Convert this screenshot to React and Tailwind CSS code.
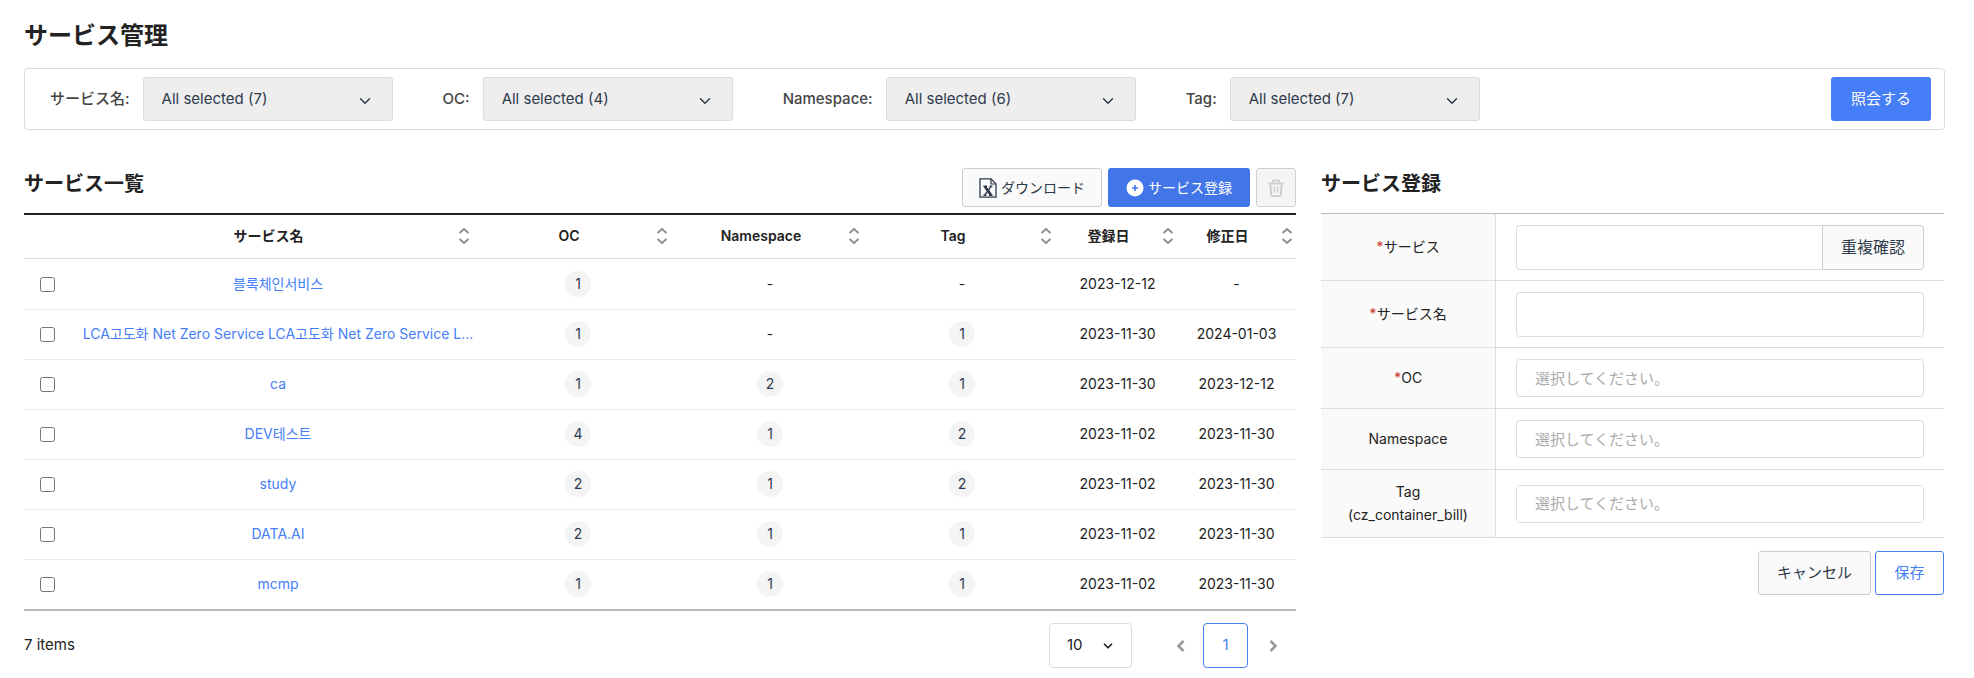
import React, { useState } from 'react';
import { ChevronDown } from 'lucide-react';
import { clsx } from 'clsx';

const filters = [
    { id: 'service', label: 'サービス名:', value: 'All selected (7)' },
    { id: 'oc', label: 'OC:', value: 'All selected (4)' },
    { id: 'namespace', label: 'Namespace:', value: 'All selected (6)' },
    { id: 'tag', label: 'Tag:', value: 'All selected (7)' },
];

const columns = [
    { label: 'サービス名', className: 'pl-2 pr-[9px]' },
    { label: 'OC', className: 'pl-[3px] pr-[3px]' },
    { label: 'Namespace', className: 'pl-[3px] pr-[3px]' },
    { label: 'Tag', className: 'pl-[3px] pr-[3px]' },
    { label: '登録日', className: '' },
    { label: '修正日', className: '' },
];

const services = [
    { name: '블록체인서비스', oc: 1, namespace: 0, tag: 0, created: '2023-12-12', updated: '-' },
    { name: 'LCA고도화 Net Zero Service LCA고도화 Net Zero Service L...', oc: 1, namespace: 0, tag: 1, created: '2023-11-30', updated: '2024-01-03' },
    { name: 'ca', oc: 1, namespace: 2, tag: 1, created: '2023-11-30', updated: '2023-12-12' },
    { name: 'DEV테스트', oc: 4, namespace: 1, tag: 2, created: '2023-11-02', updated: '2023-11-30' },
    { name: 'study', oc: 2, namespace: 1, tag: 2, created: '2023-11-02', updated: '2023-11-30' },
    { name: 'DATA.AI', oc: 2, namespace: 1, tag: 1, created: '2023-11-02', updated: '2023-11-30' },
    { name: 'mcmp', oc: 1, namespace: 1, tag: 1, created: '2023-11-02', updated: '2023-11-30' },
];

function ExcelIcon() {
    return (
        <svg width="18" height="20" viewBox="0 0 18 20" fill="none" stroke="#2f3b4c">
            <path d="M1 .8h11L17 6v13.2H1z" strokeWidth="1.3" />
            <path d="M12 1v5h5" strokeWidth="1.2" />
            <path d="M5.9 8.5l6.1 8.5" strokeWidth="2.8" />
            <path d="M12.2 8.300l-6.4 8.700M4.400 8.200h3.600M10.600 8.200h2.800M4.400 17.200h3M10 17.200h3.600" strokeWidth="1.4" />
        </svg>
    );
}

function PlusCircleIcon() {
    return (
        <svg width="18" height="18" viewBox="0 0 18 18">
            <circle cx="9" cy="9" r="8.5" fill="#fff" />
            <path d="M9 6v6M6 9h6" stroke="#4276e8" strokeWidth="1.6" />
        </svg>
    );
}

function TrashIcon() {
    return (
        <svg width="16" height="18" viewBox="0 0 16 18" fill="none" stroke="#d0d0d0" strokeWidth="2">
            <path d="M.5 4.5h15M5 4V1.5h6V4M2.5 5l.5 10.5c0 .9.6 1.5 1.4 1.5h7.2c.8 0 1.4-.6 1.4-1.5L13.5 5" />
            <path d="M6.4 7.5v6.5M9.6 7.5v6.5" strokeWidth="1.5" />
        </svg>
    );
}

function SortIcon() {
    return (
        <svg width="18" height="18" viewBox="0 0 18 18" fill="none" stroke="#8f8f8f" strokeWidth="2" className="shrink-0">
            <path d="M4.5 6L9 2l4.5 4M4.5 12L9 16l4.5-4" />
        </svg>
    );
}

function CountBadge({ count }) {
    if (!count) return '-';
    return (
        <span className="inline-flex size-[26px] items-center justify-center rounded-full bg-[#f4f4f4] text-sm text-[#2f3b4c]">
            {count}
        </span>
    );
}

function FilterSelect({ id, label, value }) {
    return (
        <div className="flex items-center gap-[13px]">
            <label htmlFor={id} className="text-[15px] font-medium text-[#444]">{label}</label>
            <div className="relative">
                <select id={id} className="h-11 w-[250px] appearance-none rounded-[3px] border border-[#dcdcdc] bg-[#eee] px-[18px] text-[15px] text-[#2f3b4c]">
                    <option>{value}</option>
                </select>
                <ChevronDown size={18} className="pointer-events-none absolute right-[19px] top-[15px] text-[#2f3b4c]" />
            </div>
        </div>
    );
}

function FormRow({ id, label, required, className, children }) {
    return (
        <div className={clsx('flex border-b border-[#dcdcdc]', className)}>
            <label htmlFor={id} className="flex w-[175px] shrink-0 items-center justify-center border-r border-[#dcdcdc] bg-[#fafafa] pb-0.5 text-center text-sm leading-[23px] text-[#222]">
                <span>
                    {required && <span className="font-medium text-[#d0493f]">*</span>}
                    {label}
                </span>
            </label>
            <div className="flex flex-1 items-center px-5">{children}</div>
        </div>
    );
}

const inputClass = 'w-full rounded border border-[#dcdcdc] px-[18px] text-[15px] text-[#222] placeholder:text-[#aaa]';

function ServiceTable() {
    const [checked, setChecked] = useState([]);

    const toggle = (name) => {
        setChecked(checked.includes(name) ? checked.filter((n) => n !== name) : [...checked, name]);
    };

    return (
        <table className="w-full table-fixed border-y-2 border-t-[#222] border-b-[#bbb] text-sm text-[#222]">
            <colgroup>
                <col className="w-[50px]" />
                <col />
                <col className="w-[192px]" />
                <col className="w-[192px]" />
                <col className="w-[192px]" />
                <col className="w-[119px]" />
                <col className="w-[119px]" />
            </colgroup>
            <thead>
                <tr className="h-11 border-b border-[#dcdcdc]">
                    <td />
                    {columns.map((col) => (
                        <th key={col.label} scope="col" className={clsx('p-0 font-semibold', col.className)}>
                            <button className="flex w-full items-center">
                                <span className="flex-1">{col.label}</span>
                                <SortIcon />
                            </button>
                        </th>
                    ))}
                </tr>
            </thead>
            <tbody>
                {services.map((s) => (
                    <tr key={s.name} className="h-[50px] border-b border-[#ebebeb] text-center first:h-[51px] last:h-[51px] last:border-b-0">
                        <td className="pr-[3px]">
                            <input
                                type="checkbox"
                                aria-label={s.name}
                                checked={checked.includes(s.name)}
                                onChange={() => toggle(s.name)}
                                className="mt-1.5 size-[15px]"
                            />
                        </td>
                        <td className="whitespace-nowrap">
                            <a href="#" className="text-[#467ef8]">{s.name}</a>
                        </td>
                        <td><CountBadge count={s.oc} /></td>
                        <td><CountBadge count={s.namespace} /></td>
                        <td><CountBadge count={s.tag} /></td>
                        <td>{s.created}</td>
                        <td>{s.updated}</td>
                    </tr>
                ))}
            </tbody>
        </table>
    );
}

function Pagination() {
    return (
        <div className="mt-3 flex items-center text-[15px] text-[#222]">
            <p className="flex-1">7 items</p>
            <div className="relative mr-[45px]">
                <select aria-label="Items per page" className="h-[45px] w-[83px] appearance-none rounded border border-[#dcdcdc] px-[17px]">
                    <option>10</option>
                </select>
                <ChevronDown size={14} strokeWidth={3} className="pointer-events-none absolute right-[17px] top-4" />
            </div>
            <button aria-label="Previous page" className="mr-[18px] flex h-[45px] items-center">
                <svg width="8" height="12" viewBox="0 0 8 12" fill="none" stroke="#999" strokeWidth="2.5">
                    <path d="M6.5 1l-5 5 5 5" />
                </svg>
            </button>
            <button className="h-[45px] w-[45px] rounded border border-[#467ef8] text-[#467ef8]">1</button>
            <button aria-label="Next page" className="ml-[21px] mr-[19px] flex h-[45px] items-center">
                <svg width="8" height="12" viewBox="0 0 8 12" fill="none" stroke="#999" strokeWidth="2.5">
                    <path d="M1.5 1l5 5-5 5" />
                </svg>
            </button>
        </div>
    );
}

export default function App() {
    return (
        <main className="bg-white py-5 pl-6 pr-[29px] font-['Inter','Noto_Sans_CJK_JP',sans-serif] text-[#222]">
            <h1 className="text-2xl font-semibold leading-8">サービス管理</h1>

            <form className="mt-4 flex items-center gap-[50px] rounded border border-[#dcdcdc] py-2 pl-[25px] pr-[13px]">
                {filters.map((f) => (
                    <FilterSelect key={f.id} {...f} />
                ))}
                <button type="button" className="ml-auto h-11 w-[100px] rounded-[3px] bg-[#467ef8] text-[15px] text-white">
                    照会する
                </button>
            </form>

            <div className="mt-9 grid grid-cols-[minmax(0,1272fr)_minmax(0,624fr)] gap-[25px]">
                <section>
                    <div className="flex h-[47px] items-start gap-1.5">
                        <h2 className="flex-1 text-xl font-semibold leading-9">サービス一覧</h2>
                        <button className="mt-0.5 flex h-[39px] w-[140px] items-center justify-center gap-1 rounded-[3px] border border-[#ccc] bg-[#fafafa] text-sm text-[#2f3b4c]">
                            <ExcelIcon />
                            ダウンロード
                        </button>
                        <button className="mt-0.5 flex h-[39px] w-[142px] items-center justify-center gap-1 rounded-[3px] bg-[#4276e8] text-sm text-white">
                            <PlusCircleIcon />
                            サービス登録
                        </button>
                        <button aria-label="削除" disabled className="mt-0.5 flex h-[39px] w-10 items-center justify-center rounded-[3px] border border-[#d0d0d0] bg-[#f5f5f5]">
                            <TrashIcon />
                        </button>
                    </div>
                    <ServiceTable />
                    <Pagination />
                </section>

                <form className="pr-px">
                    <h2 className="h-[47px] text-xl font-semibold leading-9">サービス登録</h2>
                    <div className="border-t border-[#bbb]">
                        <FormRow id="service-id" label="サービス" required className="h-[67px]">
                            <input id="service-id" className="h-[45px] min-w-0 flex-1 rounded-l border border-r-0 border-[#dcdcdc] px-[18px]" />
                            <button type="button" className="h-[45px] w-[102px] rounded-r border border-[#ccc] bg-[#fafafa] text-base text-[#2f3b4c]">
                                重複確認
                            </button>
                        </FormRow>
                        <FormRow id="service-name" label="サービス名" required className="h-[67px]">
                            <input id="service-name" className={clsx(inputClass, 'h-[45px]')} />
                        </FormRow>
                        <FormRow id="form-oc" label="OC" required className="h-[61px]">
                            <input id="form-oc" placeholder="選択してください。" className={clsx(inputClass, 'h-[38px]')} />
                        </FormRow>
                        <FormRow id="form-namespace" label="Namespace" className="h-[61px]">
                            <input id="form-namespace" placeholder="選択してください。" className={clsx(inputClass, 'h-[38px]')} />
                        </FormRow>
                        <FormRow id="form-tag" label={<>Tag<br />(cz_container_bill)</>} className="h-[68px]">
                            <input id="form-tag" placeholder="選択してください。" className={clsx(inputClass, 'h-[38px]')} />
                        </FormRow>
                    </div>
                    <div className="mt-[13px] flex justify-end gap-1 text-[15px]">
                        <button type="button" className="h-11 w-[113px] rounded-[3px] border border-[#ccc] bg-[#fafafa] text-[#2f3b4c]">キャンセル</button>
                        <button type="button" className="h-11 w-[69px] rounded-[3px] border border-[#467ef8] bg-white text-[#467ef8]">保存</button>
                    </div>
                </form>
            </div>
        </main>
    );
}
